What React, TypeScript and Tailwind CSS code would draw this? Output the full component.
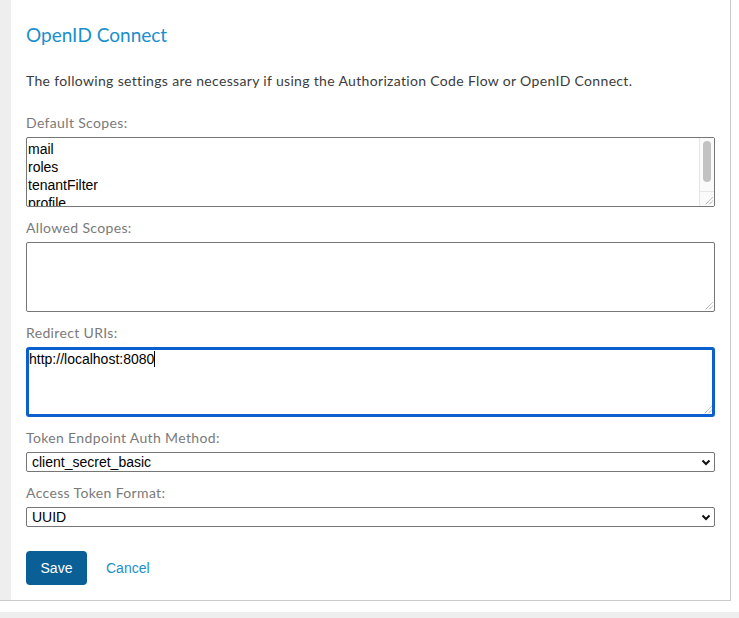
import React from "react"

const sans = "font-['Lato','Open_Sans',sans-serif]"
const ctl = "font-['Liberation_Sans',Arial,sans-serif]"

function Grip() {
  return (
    <svg width="9" height="9" viewBox="0 0 9 9" className="block">
      <path d="M8.5 1.5 L1.5 8.5 M8.5 5 L5 8.5" stroke="#8a8a8a" strokeWidth="1" strokeDasharray="1 0.6" />
    </svg>
  )
}

function Chevron() {
  return (
    <svg width="10" height="7" viewBox="0 0 10 7" className="block">
      <path d="M1.5 1.5 L5 5 L8.5 1.5" fill="none" stroke="#111" strokeWidth="2" />
    </svg>
  )
}

function Label({ children, first }: { children: React.ReactNode; first?: boolean }) {
  return (
    <div className={`${first ? "mt-[22px]" : "mt-[11px]"} mb-[4px] text-[14px] leading-[20px] tracking-[0.35px] text-[#7a7a7a]`}>
      {children}
    </div>
  )
}

function SelectBox({ value }: { value: string }) {
  return (
    <div className={`${ctl} flex h-[20px] items-center justify-between rounded-[2px] border border-[#767676] bg-white pl-[5px] pr-[3px] text-[14px] text-black`}>
      <span>{value}</span>
      <Chevron />
    </div>
  )
}

export default function App() {
  const scopes = ["mail", "roles", "tenantFilter", "profile"]

  return (
    <div className={`${sans} min-h-[618px] overflow-hidden bg-white`}>
      <div className="flex w-[731px] border-r border-b border-[#cccccc]">
        <div className="w-[11px] shrink-0 bg-[#eeeeee]" />

        <div className="flex-1 px-[15px] pt-[23px] pb-[15px]">
          <h2 className="text-[19px] leading-[24px] text-[#1a8fcd]">OpenID Connect</h2>

          <p className="mt-[24px] text-[14px] leading-[20px] tracking-[0.33px] text-[#3c3c3c]">
            The following settings are necessary if using the Authorization Code Flow or OpenID Connect.
          </p>

          <Label first>Default Scopes:</Label>
          <div className={`${ctl} flex h-[70px] overflow-hidden rounded-[2px] border border-[#767676] text-[14px] leading-[18px] text-black`}>
            <div className="flex-1 overflow-hidden pt-[2px] pl-[1px]">
              {scopes.map((s) => (
                <div key={s}>{s}</div>
              ))}
            </div>
            <div className="flex w-[15px] flex-col border-l border-[#e6e6e6] bg-[#fafafa]">
              <div className="flex-1 pt-[3px] pl-[3px]">
                <div className="h-[41px] w-[8px] rounded-full bg-[#c2c2c2]" />
              </div>
              <div className="flex h-[15px] items-end justify-end border-t border-[#e6e6e6] pr-[1px] pb-[1px]">
                <Grip />
              </div>
            </div>
          </div>

          <Label>Allowed Scopes:</Label>
          <div className="flex h-[70px] items-end justify-end rounded-[2px] border border-[#767676] pr-[1px] pb-[1px]">
            <Grip />
          </div>

          <Label>Redirect URIs:</Label>
          <div className={`${ctl} flex h-[70px] flex-col rounded-[3px] border-[3px] border-[#0b5fce] text-[14px] leading-[18px] text-black`}>
            <div>
              http://localhost:8080
              <span className="inline-block h-[16px] w-[1px] bg-black align-[-3px]" />
            </div>
            <div className="mt-auto flex justify-end">
              <Grip />
            </div>
          </div>

          <Label>Token Endpoint Auth Method:</Label>
          <SelectBox value="client_secret_basic" />

          <Label>Access Token Format:</Label>
          <SelectBox value="UUID" />

          <div className={`${ctl} mt-[24px] flex items-center text-[14px]`}>
            <button className="h-[34px] w-[61px] rounded-[4px] bg-[#0b5f97] text-white">Save</button>
            <a className="ml-[19px] text-[#1b8fcc]">Cancel</a>
          </div>
        </div>
      </div>

      <div className="mt-[11px] h-[20px] bg-[#eeeeee]" />
    </div>
  )
}
